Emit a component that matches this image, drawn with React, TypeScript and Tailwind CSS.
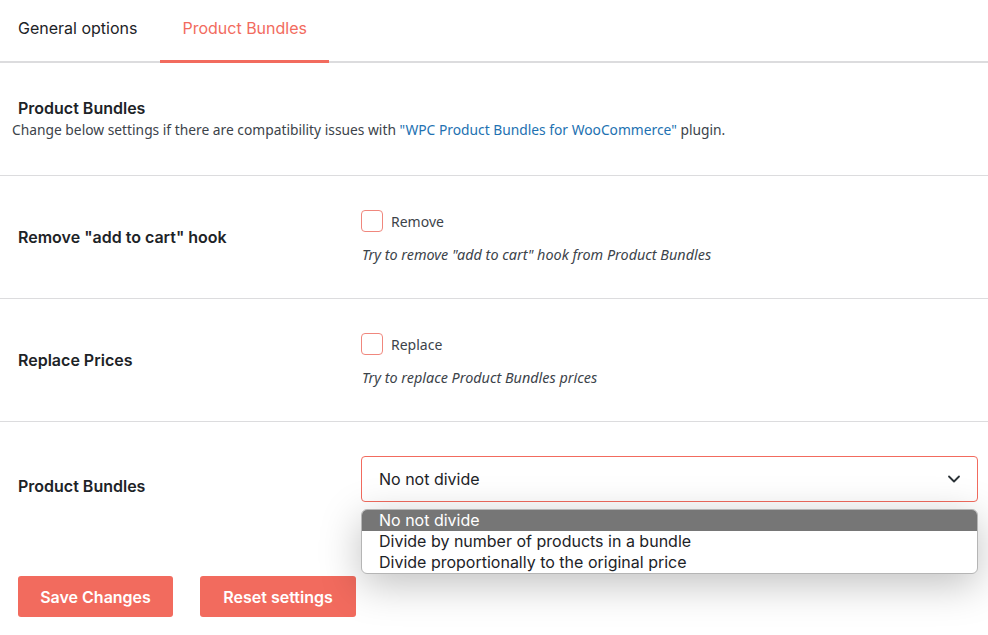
import { ChevronDown } from "lucide-react";

const inter = "font-['Inter',sans-serif]";
const wp = "font-['Noto_Sans','Open_Sans',sans-serif]";

function CheckRow({ label, box, hint }: { label: string; box: string; hint: string }) {
  return (
    <div className="flex h-[123px] items-center border-b border-[#dcdcde]">
      <div className={`w-[361px] shrink-0 pl-[18px] text-[16px] font-semibold text-[#1d2327] ${inter}`}>
        {label}
      </div>
      <div className={`flex flex-col gap-[12px] pt-[2px] ${wp}`}>
        <label className="flex items-center gap-2 text-[14px] text-[#3c434a]">
          <span className="h-[22px] w-[22px] rounded-[4px] border border-[#f0877d] bg-white" />
          {box}
        </label>
        <p className="pl-px text-[14.4px] italic text-[#3c434a]">{hint}</p>
      </div>
    </div>
  );
}

export default function App() {
  return (
    <div className="min-h-[635px] w-[988px] overflow-hidden bg-white text-[#1d2327]">
      {/* tabs */}
      <div className={`flex h-[63px] border-b-2 border-[#dcdcde] ${inter} text-[16px]`}>
        <div className="-mb-[2px] flex items-center pb-[8px] pl-[18px] pr-[23px]">General options</div>
        <div className="-mb-[2px] flex items-center border-b-[3px] border-[#f26b5e] px-[22px] pb-[5px] text-[#f26b5e]">
          Product Bundles
        </div>
      </div>

      {/* intro */}
      <div className="h-[113px] border-b border-[#dcdcde] pt-[33px]">
        <h2 className={`pl-[18px] text-[16px] font-semibold ${inter}`}>Product Bundles</h2>
        <p className={`pl-[12px] text-[13.8px] text-[#3c434a] ${wp}`}>
          Change below settings if there are compatibility issues with{" "}
          <a className="text-[#2271b1]">"WPC Product Bundles for WooCommerce"</a> plugin.
        </p>
      </div>

      <CheckRow
        label={'Remove "add to cart" hook'}
        box="Remove"
        hint={'Try to remove "add to cart" hook from Product Bundles'}
      />
      <CheckRow label="Replace Prices" box="Replace" hint="Try to replace Product Bundles prices" />

      {/* select row */}
      <div className="flex h-[128px]">
        <div className={`w-[361px] shrink-0 self-center pl-[18px] text-[16px] font-semibold ${inter}`}>
          Product Bundles
        </div>
        <div className="relative w-[617px] pt-[34px]">
          <div
            className={`flex h-[46px] items-center justify-between rounded-[4px] border border-[#f26b5e] pl-[17px] pr-[13px] text-[16px] text-[#1d2327] ${inter}`}
          >
            No not divide
            <ChevronDown className="h-[20px] w-[20px] text-[#2c3338]" strokeWidth={2.2} />
          </div>
          <ul
            className={`absolute left-0 right-0 top-[87px] z-10 overflow-hidden rounded-[6px] border border-[#b5b5b5] bg-white text-[16px] leading-[21px] text-[#1d2327] shadow-[0_10px_40px_rgba(0,0,0,0.25)] ${inter}`}
          >
            <li className="bg-[#767676] pl-[17px] text-white">No not divide</li>
            <li className="pl-[17px]">Divide by number of products in a bundle</li>
            <li className="pl-[17px]">Divide proportionally to the original price</li>
          </ul>
        </div>
      </div>

      {/* actions */}
      <div className={`mt-[26px] flex gap-[27px] pl-[18px] ${inter}`}>
        <button className="h-[41px] w-[155px] rounded-[3px] bg-[#f26b5e] text-[16px] font-semibold text-white">
          Save Changes
        </button>
        <button className="h-[41px] w-[156px] rounded-[3px] bg-[#f26b5e] text-[16px] font-semibold text-white">
          Reset settings
        </button>
      </div>
    </div>
  );
}
